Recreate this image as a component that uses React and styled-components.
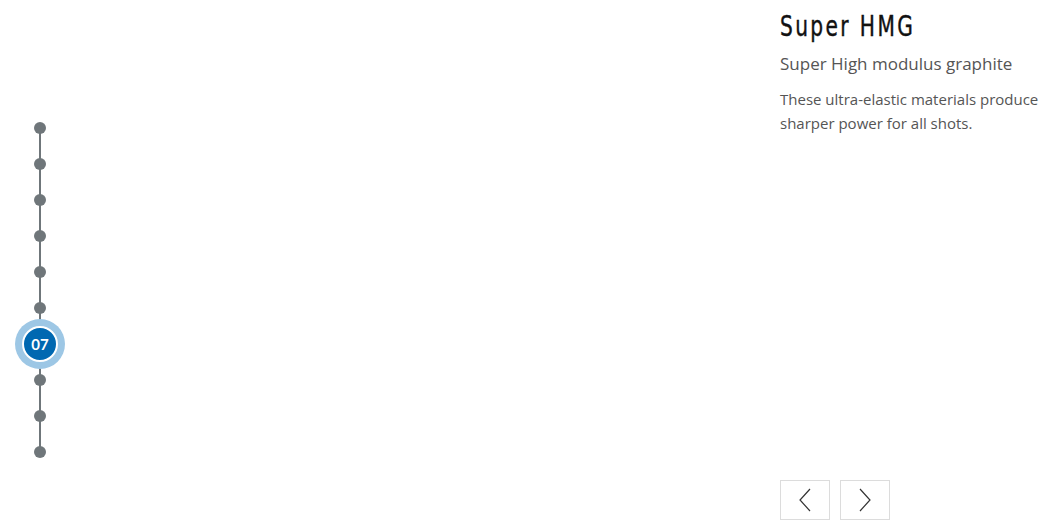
import React from 'react';
import styled, { createGlobalStyle } from 'styled-components';

const GlobalStyle = createGlobalStyle`
    html, body {
        margin: 0;
        padding: 0;
        background: #fff;
    }
    body {
        font-family: "Open Sans", "Liberation Sans", sans-serif;
    }
`;

const Page = styled.div`
    display: flex;
    width: 1049px;
    height: 529px;
    overflow: hidden;
`;

const Timeline = styled.ul`
    position: relative;
    list-style: none;
    margin: 0;
    padding: 110px 0 0;
    width: 80px;
    align-self: flex-start;
    &::before {
        content: "";
        position: absolute;
        left: 39px;
        top: 128px;
        height: 324px;
        width: 2px;
        background: #6f767a;
    }
`;

const Step = styled.li`
    position: relative;
    height: 36px;
    display: flex;
    align-items: center;
    justify-content: center;
`;

const Dot = styled.span`
    width: 12px;
    height: 12px;
    border-radius: 50%;
    background: #6f767a;
`;

const ActiveDot = styled.span`
    position: relative;
    z-index: 1;
    flex: none;
    width: 50px;
    height: 50px;
    border-radius: 50%;
    background: #9dc7e5;
    display: flex;
    align-items: center;
    justify-content: center;
    & > span {
        width: 32px;
        height: 32px;
        border-radius: 50%;
        background: #0068b1;
        border: 2px solid #fff;
        color: #fff;
        font-family: "Lato", "Liberation Sans", sans-serif;
        font-weight: 700;
        font-size: 15px;
        display: flex;
        align-items: center;
        justify-content: center;
    }
`;

const Spacer = styled.div`
    flex: 1;
`;

const Panel = styled.div`
    width: 269px;
    display: flex;
    flex-direction: column;
    padding: 8px 0 9px;
    box-sizing: border-box;
`;

const Title = styled.h2`
    margin: 0;
    height: 38px;
    font-family: "DejaVu Sans Condensed", "Liberation Sans", sans-serif;
    font-weight: 400;
    font-size: 28px;
    line-height: 38px;
    letter-spacing: 3px;
    color: #111;
    white-space: nowrap;
    -webkit-text-stroke: 0.4px #111;
    & > span {
        display: inline-block;
        transform: scaleX(0.8);
        transform-origin: left center;
    }
`;

const Subtitle = styled.h3`
    margin: 7px 0 0;
    font-family: "Open Sans", "Liberation Sans", sans-serif;
    font-weight: 400;
    font-size: 17px;
    line-height: 22px;
    color: #555;
`;

const Text = styled.p`
    margin: 12px 0 0;
    font-family: "Open Sans", "Liberation Sans", sans-serif;
    font-size: 15px;
    line-height: 24px;
    color: #555;
`;

const Nav = styled.div`
    margin-top: auto;
    display: flex;
    gap: 10px;
`;

const NavButton = styled.button`
    width: 50px;
    height: 40px;
    padding: 0;
    border: 1px solid #dcdcdc;
    background: #fff;
    display: flex;
    align-items: center;
    justify-content: center;
    cursor: pointer;
`;

const Chevron = ({ dir }) => (
    <svg width="14" height="24" viewBox="0 0 14 24">
        <polyline
            points={dir === 'left' ? '12,1 2,12 12,23' : '2,1 12,12 2,23'}
            fill="none"
            stroke="#333"
            strokeWidth="1.2"
        />
    </svg>
);

const steps = Array.from({ length: 10 }, (_, i) => i + 1);

const App = () => {
    const active = 7;
    return (
        <Page>
            <GlobalStyle />
            <Timeline>
                {steps.map(n => (
                    <Step key={n}>
                        {n === active
                            ? <ActiveDot><span>{String(n).padStart(2, '0')}</span></ActiveDot>
                            : <Dot />}
                    </Step>
                ))}
            </Timeline>
            <Spacer />
            <Panel>
                <Title><span>Super HMG</span></Title>
                <Subtitle>Super High modulus graphite</Subtitle>
                <Text>These ultra-elastic materials produce sharper power for all shots.</Text>
                <Nav>
                    <NavButton aria-label="previous"><Chevron dir="left" /></NavButton>
                    <NavButton aria-label="next"><Chevron dir="right" /></NavButton>
                </Nav>
            </Panel>
        </Page>
    );
};

export default App;
